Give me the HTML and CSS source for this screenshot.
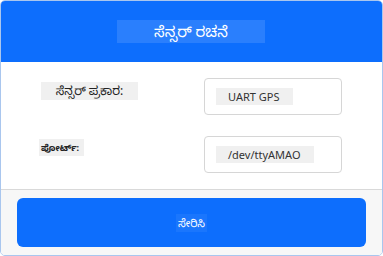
FILE: index.html
```html
<!DOCTYPE html>
<html lang="kn">

<head>
    <meta charset="UTF-8">
    <meta name="viewport" content="width=device-width, initial-scale=1.0">
    <title>ಸೆನ್ಸರ್ ರಚನೆ</title>
    <link rel="stylesheet" href="styles.css">
</head>

<body>
    <div class="card">
        <div class="card-header">
            <span class="title">ಸೆನ್ಸರ್ ರಚನೆ</span>
        </div>

        <div class="card-body">
            <div class="row">
                <span class="label wide">ಸೆನ್ಸರ್ ಪ್ರಕಾರ:</span>
                <div class="field"><span class="value">UART GPS</span></div>
            </div>
            <div class="row">
                <span class="label small">ಪೋರ್ಟ್:</span>
                <div class="field"><span class="value">/dev/ttyAMAO</span></div>
            </div>
        </div>

        <div class="card-footer">
            <button class="button"><span>ಸೇರಿಸಿ</span></button>
        </div>
    </div>
</body>

</html>
```

FILE: styles.css
```css
* {
    margin: 0;
    padding: 0;
    box-sizing: border-box;
}

body {
    font-family: 'Noto Sans', 'Noto Sans Kannada', sans-serif;
    width: 383px;
    height: 256px;
    background: #fff;
}

.card {
    width: 383px;
    height: 256px;
    border: 1px solid #a9c6ee;
    border-radius: 5px;
    overflow: hidden;
    display: flex;
    flex-direction: column;
}

.card-header {
    height: 61px;
    background-color: #0d6efd;
    display: flex;
    justify-content: center;
    align-items: center;
}

.title {
    width: 148px;
    text-align: center;
    background-color: #2a7ffd;
    color: #fff;
    font-size: 15px;
    line-height: 23px;
    margin-right: 1px;
}

.card-body {
    flex: 1;
    background-color: #fff;
    padding: 16px 40px 0 38px;
    display: flex;
    flex-direction: column;
    gap: 21px;
}

.row {
    display: flex;
    justify-content: space-between;
    align-items: flex-start;
}

.label {
    background-color: #f0f0f0;
    color: #222;
    font-size: 12px;
    line-height: 18px;
    margin-top: 4px;
}

.label.wide {
    width: 97px;
    text-align: center;
    margin-left: 2px;
}

.label.small {
    font-size: 9px;
    font-weight: bold;
    padding: 0 5px 0 2px;
    margin-top: 3px;
    line-height: 17px;
}

.field {
    width: 138px;
    height: 37px;
    border: 1px solid #d6d6d6;
    border-radius: 4px;
    display: flex;
    align-items: center;
    padding-left: 11px;
}

.value {
    background-color: #f0f0f0;
    color: #333;
    font-size: 11px;
    line-height: 17px;
    padding: 0 14px 0 12px;
}

.card-footer {
    height: 66px;
    background-color: #f7f7f7;
    border-top: 1px solid #d9d9d9;
    padding: 8px 16px 8px 16px;
    display: flex;
}

.button {
    flex: 1;
    background-color: #0d6efd;
    border: none;
    border-radius: 6px;
    color: #fff;
    font-family: inherit;
    font-size: 11px;
    display: flex;
    justify-content: center;
    align-items: center;
}

.button span {
    background-color: #1a76fd;
    padding: 0 2px;
    line-height: 18px;
}
```
